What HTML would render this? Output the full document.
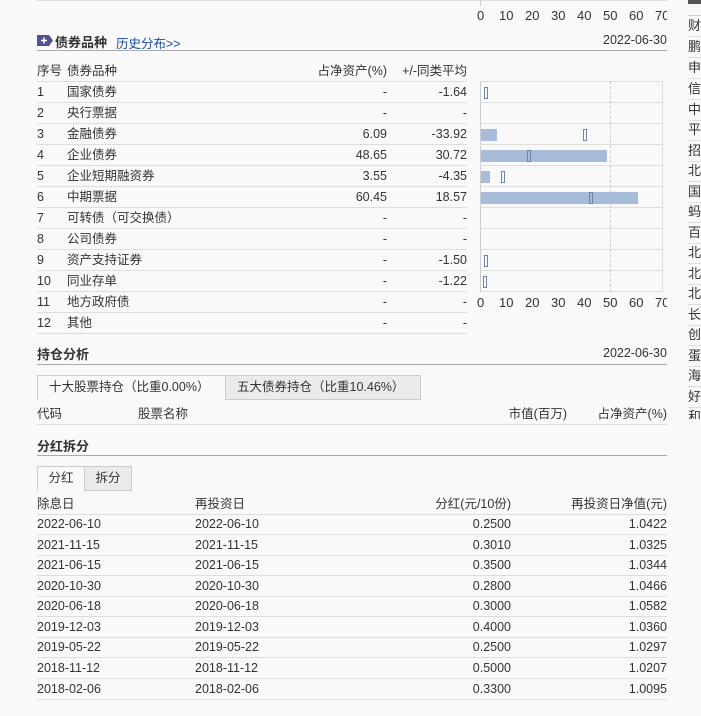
<!DOCTYPE html>
<html><head><meta charset="utf-8"><style>
*{margin:0;padding:0;box-sizing:border-box}
body{width:701px;height:716px;background:#f9f9f9;font-family:"Liberation Sans","Noto Sans CJK SC",sans-serif;font-size:12.5px;color:#333;position:relative;overflow:hidden}
.a{position:absolute;white-space:nowrap}
.r{position:absolute;left:37px;width:430px;height:21px;border-bottom:1px solid #ddd;line-height:20px}
.r span{position:absolute}
.h{font-weight:bold;font-size:13px}
.line{position:absolute;left:37px;width:630px;height:1px;background:#aaa}
.dr{position:absolute;left:37px;width:630px;height:21px;border-bottom:1px solid #ddd;line-height:20px}
.dr span{position:absolute}
.rc{position:absolute;left:688px;width:13px;height:21px;border-bottom:1px solid #ddd;line-height:20px;overflow:hidden;font-size:13px}
.tick{position:absolute;font-size:13px;top:8px}
</style></head><body>
<div class="a" style="left:37px;top:0;width:630px;height:1px;background:#ddd"></div>
<div class="a" style="left:480px;top:0;width:182px;height:6px;border-left:1px solid #ccc"></div>
<div class="tick" style="left:477px">0</div><div class="tick" style="left:499px">10</div><div class="tick" style="left:525px">20</div><div class="tick" style="left:551px">30</div><div class="tick" style="left:577px">40</div><div class="tick" style="left:603px">50</div><div class="tick" style="left:629px">60</div><div class="tick" style="left:655px;width:12px;overflow:hidden">70</div>

<svg class="a" style="left:37px;top:35px" width="16" height="11"><path d="M0 0H12L16 5.5L12 11H0Z" fill="#4f5590"/><path d="M4 5.5H10M7 2.5V8.5" stroke="#fff" stroke-width="1.5"/></svg>
<div class="a h" style="left:55px;top:32px">债券品种</div>
<div class="a" style="left:116px;top:33px;color:#1a4ea0">历史分布&gt;&gt;</div>
<div class="a" style="left:603px;top:33px">2022-06-30</div>
<div class="line" style="top:50px"></div>

<div class="r" style="top:61px;height:21px"><span style="left:0">序号</span><span style="left:30px">债券品种</span><span style="right:80px">占净资产(%)</span><span style="right:0">+/-同类平均</span></div>
<div class="r" style="top:82px"><span style="left:0">1</span><span style="left:30px">国家债券</span><span style="right:80px">-</span><span style="right:0">-1.64</span></div>
<div class="r" style="top:103px"><span style="left:0">2</span><span style="left:30px">央行票据</span><span style="right:80px">-</span><span style="right:0">-</span></div>
<div class="r" style="top:124px"><span style="left:0">3</span><span style="left:30px">金融债券</span><span style="right:80px">6.09</span><span style="right:0">-33.92</span></div>
<div class="r" style="top:145px"><span style="left:0">4</span><span style="left:30px">企业债券</span><span style="right:80px">48.65</span><span style="right:0">30.72</span></div>
<div class="r" style="top:166px"><span style="left:0">5</span><span style="left:30px">企业短期融资券</span><span style="right:80px">3.55</span><span style="right:0">-4.35</span></div>
<div class="r" style="top:187px"><span style="left:0">6</span><span style="left:30px">中期票据</span><span style="right:80px">60.45</span><span style="right:0">18.57</span></div>
<div class="r" style="top:208px"><span style="left:0">7</span><span style="left:30px">可转债（可交换债）</span><span style="right:80px">-</span><span style="right:0">-</span></div>
<div class="r" style="top:229px"><span style="left:0">8</span><span style="left:30px">公司债券</span><span style="right:80px">-</span><span style="right:0">-</span></div>
<div class="r" style="top:250px"><span style="left:0">9</span><span style="left:30px">资产支持证券</span><span style="right:80px">-</span><span style="right:0">-1.50</span></div>
<div class="r" style="top:271px"><span style="left:0">10</span><span style="left:30px">同业存单</span><span style="right:80px">-</span><span style="right:0">-1.22</span></div>
<div class="r" style="top:292px"><span style="left:0">11</span><span style="left:30px">地方政府债</span><span style="right:80px">-</span><span style="right:0">-</span></div>
<div class="r" style="top:313px"><span style="left:0">12</span><span style="left:30px">其他</span><span style="right:80px">-</span><span style="right:0">-</span></div>

<div class="a" style="left:480px;top:81px;width:183px;height:211px;border:1px solid #ddd;border-left:1px solid #ccc"></div>
<div class="a" style="left:480px;top:102px;width:183px;height:1px;background:#ddd"></div>
<div class="a" style="left:480px;top:123px;width:183px;height:1px;background:#ddd"></div>
<div class="a" style="left:480px;top:144px;width:183px;height:1px;background:#ddd"></div>
<div class="a" style="left:480px;top:165px;width:183px;height:1px;background:#ddd"></div>
<div class="a" style="left:480px;top:186px;width:183px;height:1px;background:#ddd"></div>
<div class="a" style="left:480px;top:207px;width:183px;height:1px;background:#ddd"></div>
<div class="a" style="left:480px;top:228px;width:183px;height:1px;background:#ddd"></div>
<div class="a" style="left:480px;top:249px;width:183px;height:1px;background:#ddd"></div>
<div class="a" style="left:480px;top:270px;width:183px;height:1px;background:#ddd"></div>
<div class="a" style="left:610px;top:81px;width:0;height:211px;border-left:1px dashed #ccc"></div>
<div class="a" style="left:481px;top:129px;width:16px;height:12px;background:#a7bcd8"></div>
<div class="a" style="left:481px;top:150px;width:126px;height:12px;background:#a7bcd8"></div>
<div class="a" style="left:481px;top:171px;width:9px;height:12px;background:#a7bcd8"></div>
<div class="a" style="left:481px;top:192px;width:157px;height:12px;background:#a7bcd8"></div>
<div class="a" style="left:484px;top:87px;width:4px;height:12px;border:1px solid #6b84b0"></div>
<div class="a" style="left:583px;top:129px;width:4px;height:12px;border:1px solid #6b84b0"></div>
<div class="a" style="left:527px;top:150px;width:4px;height:12px;border:1px solid #6b84b0"></div>
<div class="a" style="left:501px;top:171px;width:4px;height:12px;border:1px solid #6b84b0"></div>
<div class="a" style="left:589px;top:192px;width:4px;height:12px;border:1px solid #6b84b0"></div>
<div class="a" style="left:484px;top:255px;width:4px;height:12px;border:1px solid #6b84b0"></div>
<div class="a" style="left:483px;top:276px;width:4px;height:12px;border:1px solid #6b84b0"></div>
<div class="tick" style="left:477px;top:295px">0</div><div class="tick" style="left:499px;top:295px">10</div><div class="tick" style="left:525px;top:295px">20</div><div class="tick" style="left:551px;top:295px">30</div><div class="tick" style="left:577px;top:295px">40</div><div class="tick" style="left:603px;top:295px">50</div><div class="tick" style="left:629px;top:295px">60</div><div class="tick" style="left:655px;top:295px;width:12px;overflow:hidden">70</div>

<div class="a h" style="left:37px;top:344px">持仓分析</div>
<div class="a" style="left:603px;top:346px">2022-06-30</div>
<div class="line" style="top:364px"></div>
<div class="a" style="left:37px;top:375px;width:189px;height:25px;border:1px solid #ccc;border-bottom:none;background:#f9f9f9;line-height:23px;padding-left:11px">十大股票持仓（比重0.00%）</div>
<div class="a" style="left:225px;top:375px;width:196px;height:25px;border:1px solid #ccc;background:#ebebeb;line-height:23px;padding-left:11px">五大债券持仓（比重10.46%）</div>
<div class="dr" style="top:404px"><span style="left:0">代码</span><span style="left:101px">股票名称</span><span style="right:100px">市值(百万)</span><span style="right:0">占净资产(%)</span></div>

<div class="a h" style="left:37px;top:436px">分红拆分</div>
<div class="line" style="top:455px"></div>
<div class="a" style="left:37px;top:466px;width:48px;height:25px;border:1px solid #ccc;border-bottom:none;line-height:23px;text-align:center">分红</div>
<div class="a" style="left:84px;top:466px;width:48px;height:25px;border:1px solid #ccc;background:#ebebeb;line-height:23px;text-align:center">拆分</div>
<div class="dr" style="top:494px"><span style="left:0">除息日</span><span style="left:158px">再投资日</span><span style="right:156px">分红(元/10份)</span><span style="right:0">再投资日净值(元)</span></div>
<div class="dr" style="top:514px"><span style="left:0">2022-06-10</span><span style="left:158px">2022-06-10</span><span style="right:156px">0.2500</span><span style="right:0">1.0422</span></div>
<div class="dr" style="top:535px"><span style="left:0">2021-11-15</span><span style="left:158px">2021-11-15</span><span style="right:156px">0.3010</span><span style="right:0">1.0325</span></div>
<div class="dr" style="top:555px"><span style="left:0">2021-06-15</span><span style="left:158px">2021-06-15</span><span style="right:156px">0.3500</span><span style="right:0">1.0344</span></div>
<div class="dr" style="top:576px"><span style="left:0">2020-10-30</span><span style="left:158px">2020-10-30</span><span style="right:156px">0.2800</span><span style="right:0">1.0466</span></div>
<div class="dr" style="top:596px"><span style="left:0">2020-06-18</span><span style="left:158px">2020-06-18</span><span style="right:156px">0.3000</span><span style="right:0">1.0582</span></div>
<div class="dr" style="top:617px"><span style="left:0">2019-12-03</span><span style="left:158px">2019-12-03</span><span style="right:156px">0.4000</span><span style="right:0">1.0360</span></div>
<div class="dr" style="top:637px"><span style="left:0">2019-05-22</span><span style="left:158px">2019-05-22</span><span style="right:156px">0.2500</span><span style="right:0">1.0297</span></div>
<div class="dr" style="top:658px"><span style="left:0">2018-11-12</span><span style="left:158px">2018-11-12</span><span style="right:156px">0.5000</span><span style="right:0">1.0207</span></div>
<div class="dr" style="top:679px"><span style="left:0">2018-02-06</span><span style="left:158px">2018-02-06</span><span style="right:156px">0.3300</span><span style="right:0">1.0095</span></div>

<div class="a" style="left:688px;top:0;width:13px;height:4px;background:#555"></div>
<div class="a" style="left:688px;top:15px;width:13px;height:1px;background:#ccc"></div>
<div class="rc" style="top:16px">财</div><div class="rc" style="top:37px">鹏</div><div class="rc" style="top:58px">申</div><div class="rc" style="top:79px">信</div><div class="rc" style="top:100px">中</div><div class="rc" style="top:120px">平</div><div class="rc" style="top:141px">招</div><div class="rc" style="top:161px">北</div><div class="rc" style="top:182px">国</div><div class="rc" style="top:202px">蚂</div><div class="rc" style="top:223px">百</div><div class="rc" style="top:243px">北</div><div class="rc" style="top:264px">北</div><div class="rc" style="top:284px">北</div><div class="rc" style="top:305px">长</div><div class="rc" style="top:325px">创</div><div class="rc" style="top:346px">蛋</div><div class="rc" style="top:366px">海</div><div class="rc" style="top:387px">好</div><div class="rc" style="top:407px;border:none;height:12px">和</div>
</body></html>
